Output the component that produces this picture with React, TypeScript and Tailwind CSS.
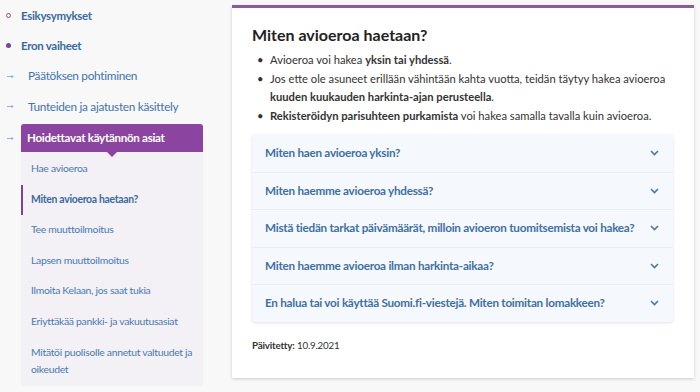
import React from "react";

const font = { fontFamily: "Lato, 'Open Sans', sans-serif" };

const topItems = [
  { label: "Esikysymykset", marker: "ring" },
  { label: "Eron vaiheet", marker: "dot" },
  { label: "Päätöksen pohtiminen", marker: "arrow" },
  { label: "Tunteiden ja ajatusten käsittely", marker: "arrow" },
];

const subItems = [
  "Hae avioeroa",
  "Miten avioeroa haetaan?",
  "Tee muuttoilmoitus",
  "Lapsen muuttoilmoitus",
  "Ilmoita Kelaan, jos saat tukia",
  "Eriyttäkää pankki- ja vakuutusasiat",
];

const questions = [
  "Miten haen avioeroa yksin?",
  "Miten haemme avioeroa yhdessä?",
  "Mistä tiedän tarkat päivämäärät, milloin avioeron tuomitsemista voi hakea?",
  "Miten haemme avioeroa ilman harkinta-aikaa?",
  "En halua tai voi käyttää Suomi.fi-viestejä. Miten toimitan lomakkeen?",
];

function Arrow() {
  return (
    <svg width="7" height="5" viewBox="0 0 7 5" className="text-[#8aa7c7]">
      <path d="M0 2.5h6M4.5 1l1.5 1.5L4.5 4" fill="none" stroke="currentColor" strokeWidth="0.9" />
    </svg>
  );
}

function Chevron() {
  return (
    <svg width="9" height="6" viewBox="0 0 9 6" className="shrink-0 text-[#4a78ad]">
      <path d="M1 1l3.5 3.5L8 1" fill="none" stroke="currentColor" strokeWidth="1.6" />
    </svg>
  );
}

function Sidebar() {
  return (
    <nav className="w-[218px] shrink-0 flex flex-col">
      {topItems.map((item) => (
        <div key={item.label} className="h-[30.5px] flex items-center">
          {item.marker === "ring" && (
            <>
              <span className="ml-[6px] w-[5px] h-[5px] rounded-full border border-[#8e4fa3]" />
              <span className="ml-[10px] text-[11.5px] tracking-[-0.3px] font-bold text-[#3a6aa0]">{item.label}</span>
            </>
          )}
          {item.marker === "dot" && (
            <>
              <span className="ml-[6px] w-[5px] h-[5px] rounded-full bg-[#7d4293]" />
              <span className="ml-[10px] text-[11.5px] tracking-[-0.3px] font-bold text-[#3a6aa0]">{item.label}</span>
            </>
          )}
          {item.marker === "arrow" && (
            <>
              <span className="ml-[7px] flex">
                <Arrow />
              </span>
              <span className="ml-[14px] text-[11.8px] tracking-[-0.3px] text-[#3f74ad]">{item.label}</span>
            </>
          )}
        </div>
      ))}
      <div className="mt-[2px] flex items-start">
        <span className="ml-[7px] mt-[12px] flex">
          <Arrow />
        </span>
        <div className="ml-[7px] w-[182px]">
          <div className="relative h-[28px] bg-[#8b45a0] rounded-t-[3px] flex items-center pl-[6px]">
            <span className="text-[11.6px] tracking-[-0.3px] font-bold text-white">Hoidettavat käytännön asiat</span>
            <span className="absolute left-[86px] -bottom-[5px] w-0 h-0 border-l-[5px] border-r-[5px] border-t-[5px] border-l-transparent border-r-transparent border-t-[#8b45a0]" />
          </div>
          <div className="bg-[#f3f0f6] pt-[2px] pb-[2px] flex flex-col">
            {subItems.map((s) => {
              const active = s === "Miten avioeroa haetaan?";
              return (
                <div
                  key={s}
                  className={
                    active
                      ? "h-[30.5px] flex items-center pl-[8px] border-l-[2px] border-[#7d4293] text-[10.4px] tracking-[-0.3px] font-bold text-[#3a6aa0]"
                      : "h-[30.5px] flex items-center pl-[10px] text-[10.4px] tracking-[-0.3px] text-[#4a7bb0]"
                  }
                >
                  {s}
                </div>
              );
            })}
            <div className="py-[7px] pl-[10px] pr-[8px] text-[10.4px] tracking-[-0.3px] leading-[16.5px] text-[#4a7bb0]">
              Mitätöi puolisolle annetut valtuudet ja oikeudet
            </div>
          </div>
        </div>
      </div>
    </nav>
  );
}

export default function App() {
  return (
    <div className="w-[700px] h-[392px] overflow-hidden bg-[#f8f8f8] flex" style={font}>
      <Sidebar />
      <main className="ml-[14px] mt-[5px] w-[462px] h-[373px] bg-white border-t-[3px] border-[#8a5b9c] shadow-[0_1px_3px_rgba(0,0,0,0.18)] px-[20px] pt-[16px]">
        <h1 className="text-[16px] font-bold text-[#222] leading-[22px]">Miten avioeroa haetaan?</h1>
        <ul className="mt-[5px] text-[11.2px] leading-[18.5px] text-[#333]">
          <li className="flex">
            <span className="w-[18px] pl-[5px]">•</span>
            <span>
              Avioeroa voi hakea <b>yksin tai yhdessä</b>.
            </span>
          </li>
          <li className="flex">
            <span className="w-[18px] pl-[5px] shrink-0">•</span>
            <span>
              Jos ette ole asuneet erillään vähintään kahta vuotta, teidän täytyy hakea avioeroa{" "}
              <b>kuuden kuukauden harkinta-ajan perusteella</b>.
            </span>
          </li>
          <li className="flex">
            <span className="w-[18px] pl-[5px]">•</span>
            <span>
              <b>Rekisteröidyn parisuhteen purkamista</b> voi hakea samalla tavalla kuin avioeroa.
            </span>
          </li>
        </ul>
        <div className="mt-[9px] w-[421px] bg-[#f5f8fc] rounded-[3px] shadow-[0_1px_3px_rgba(0,0,0,0.12)]">
          {questions.map((q, i) => (
            <div
              key={q}
              className={
                i === 0
                  ? "h-[37.5px] flex items-center justify-between pl-[13px] pr-[14px]"
                  : "h-[37.5px] flex items-center justify-between pl-[13px] pr-[14px] border-t border-[#e9eef4]"
              }
            >
              <span className="text-[11.7px] tracking-[-0.25px] font-bold text-[#3f6fa6]">{q}</span>
              <Chevron />
            </div>
          ))}
        </div>
        <p className="mt-[16px] text-[9.8px] tracking-[-0.2px] text-[#333]">
          <b>Päivitetty:</b> 10.9.2021
        </p>
      </main>
    </div>
  );
}
